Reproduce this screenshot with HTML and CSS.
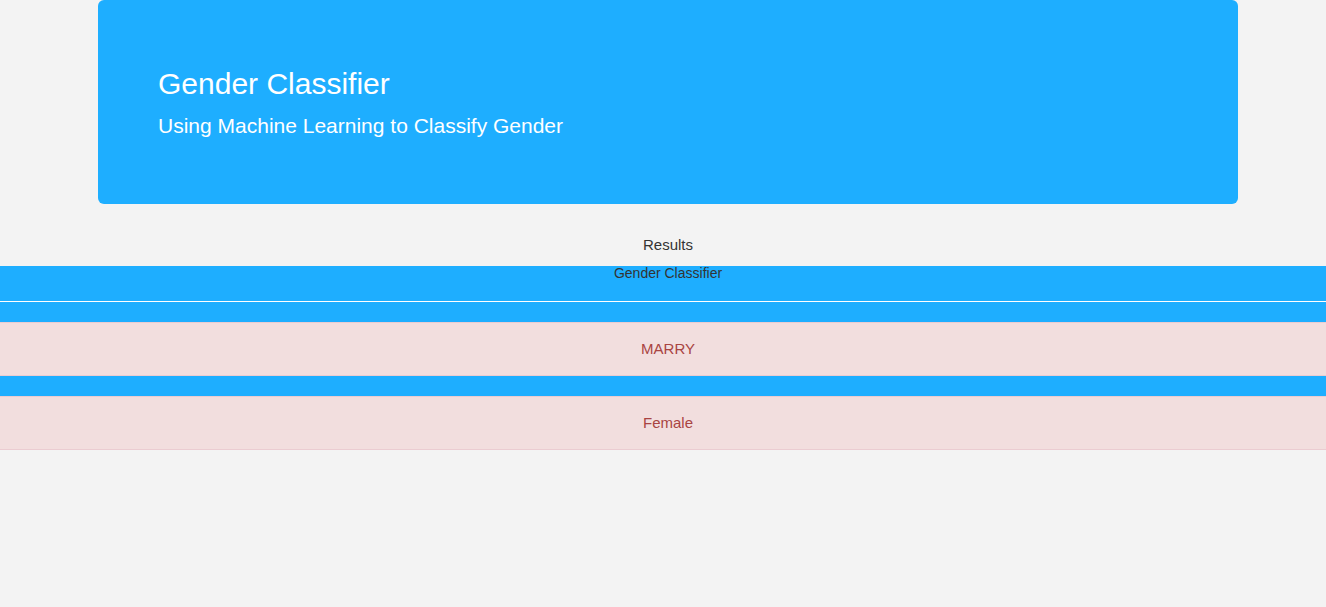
FILE: index.html
```html
<!DOCTYPE html>
<html lang="en">
<head>
<meta charset="utf-8">
<title>Gender Classifier</title>
<link rel="stylesheet" href="styles.css">
</head>
<body>
  <div class="page">
    <header class="jumbotron">
      <h1 class="jumbo-title">Gender Classifier</h1>
      <p class="jumbo-lead">Using Machine Learning to Classify Gender</p>
    </header>

    <div class="results-label">Results</div>

    <section class="results-band">
      <div class="band-title">Gender Classifier</div>
      <hr class="band-rule">
      <div class="band-body">
        <div class="alert">MARRY</div>
      </div>
    </section>
    <div class="alert">Female</div>
  </div>
</body>
</html>
```

FILE: styles.css
```css
* {
  box-sizing: border-box;
}

html,
body {
  margin: 0;
  padding: 0;
}

body {
  background: #f3f3f3;
  font-family: "Liberation Sans", Arial, sans-serif;
  font-size: 14px;
  line-height: 1.42857;
  color: #333333;
}

.page {
  display: flex;
  flex-direction: column;
}

.jumbotron {
  width: 1140px;
  margin: 0 0 30px calc(50% - 565px);
  padding: 48px 60px;
  background: #1eaeff;
  border-radius: 6px;
  color: #ffffff;
}

.jumbo-title {
  margin: 19px 0 11px;
  font-size: 30px;
  line-height: 1.1;
  font-weight: 400;
}

.jumbo-lead {
  margin: 0 0 15px;
  font-size: 21px;
  line-height: 30px;
  font-weight: 400;
}

.results-label {
  text-align: center;
  padding-left: 10px;
  margin: 1px 0 11px;
  font-size: 15px;
  line-height: 20px;
}

.results-band {
  background: #1eaeff;
}

.band-title {
  height: 35px;
  line-height: 14px;
  text-align: center;
  padding-left: 10px;
  color: #333333;
}

.band-rule {
  margin: 0;
  border: 0;
  border-top: 1px solid #ffffff;
  height: 0;
}

.band-body {
  padding: 20px 0;
}

.alert {
  background: #f2dede;
  border-top: 1px solid #ebccd1;
  border-bottom: 1px solid #ebccd1;
  color: #a94442;
  padding: 16px 0 16px 10px;
  font-size: 15px;
  line-height: 20px;
  text-align: center;
}
```
